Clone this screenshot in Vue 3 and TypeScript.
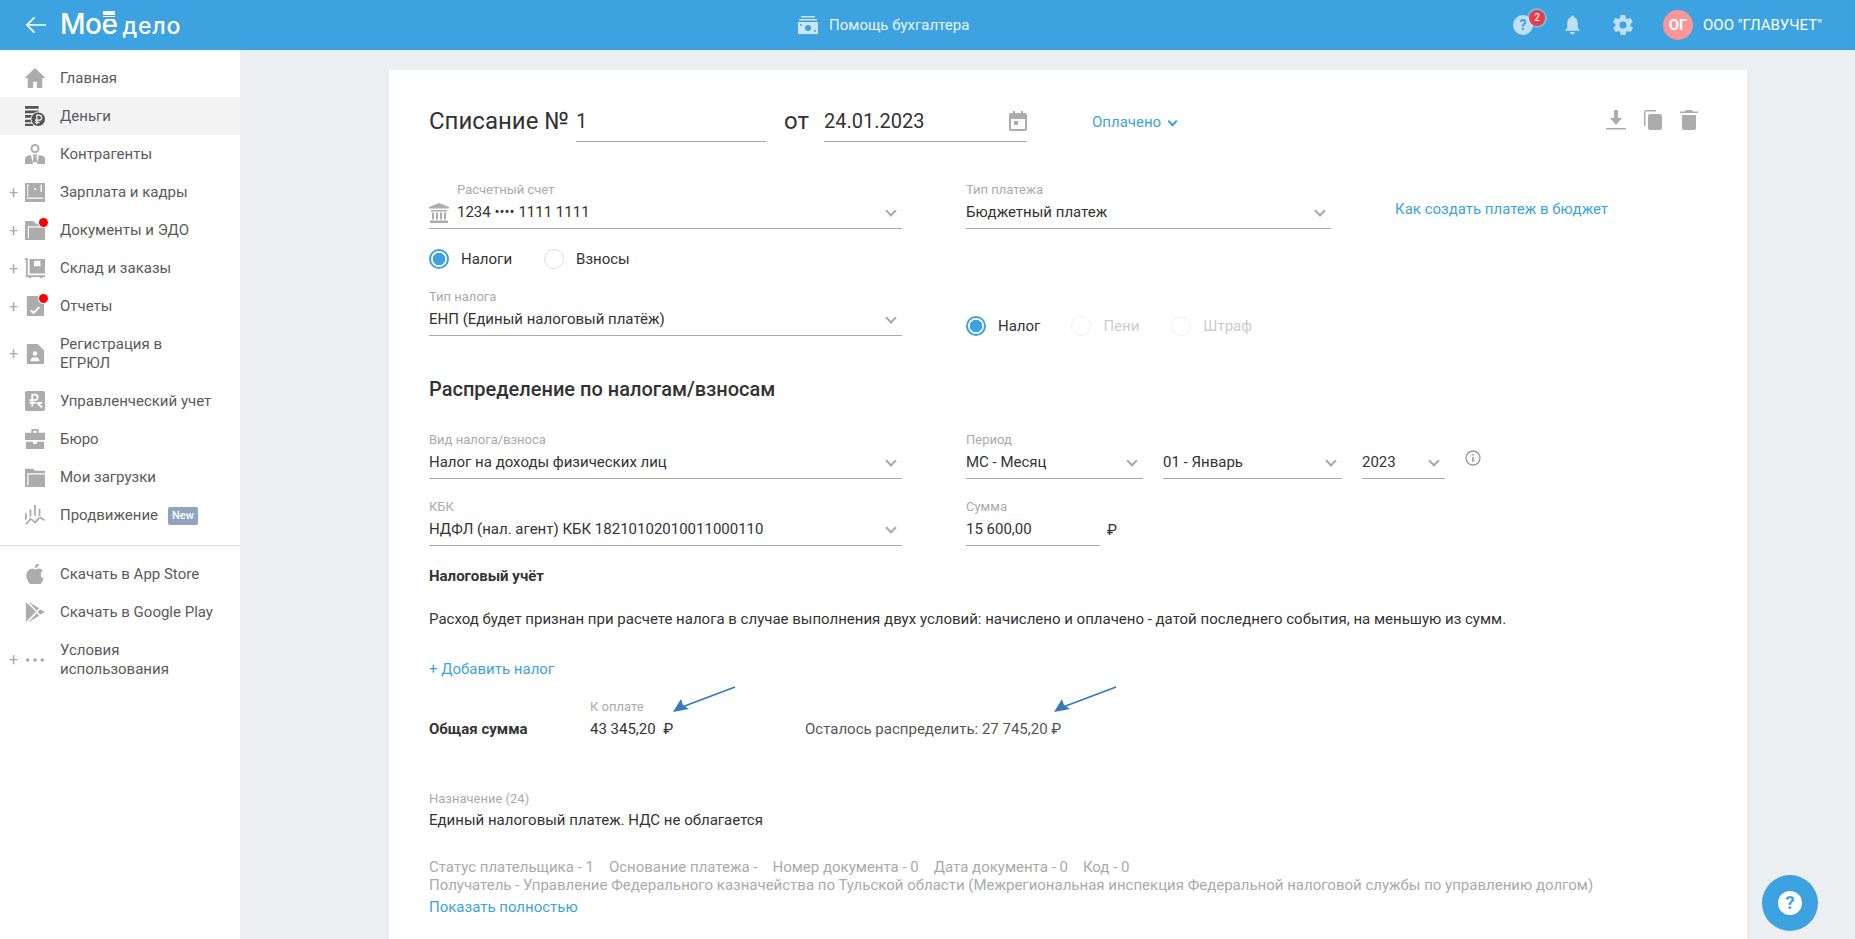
<script setup lang="ts">
interface NavItem {
  label: string
  lines?: string[]
  icon: string
  plus?: boolean
  dot?: boolean
  active?: boolean
  isNew?: boolean
  tall?: boolean
}

const navTop: NavItem[] = [
  { label: 'Главная', icon: 'M12 1 .5 12H4v11h6v-7h4v7h6V12h3.500z' },
  { label: 'Деньги', active: true, icon: 'M1 1h15v3H1zM1 6h15v3H1zM1 11h8v3H1zM1 16h7v3H1zM1 20.500h9V23H1z' },
  { label: 'Контрагенты', icon: 'M12 1a5 5 0 1 1 0 10 5 5 0 0 1 0-10zm0 2.200a2.800 2.800 0 1 0 0 5.600 2.800 2.800 0 0 0 0-5.600zM9 12.500h6l-1.500 2 1 6.500h-5l1-6.500zM7.500 13 9.500 21v2H1v-6c0-2 3-3.500 6.500-4zM16.500 13c3.500.5 6.500 2 6.500 4v6h-8.500v-2z' },
  { label: 'Зарплата и кадры', plus: true, icon: 'M1 2h22v21H1zM3 18v1.500h18V18zM3.500 4v13h1V5.500h1V4zM12 7.500a1.200 1.200 0 1 0 0 2.400 1.200 1.200 0 0 0 0-2.400zM18 4h1.500v8H18z' },
  { label: 'Документы и ЭДО', plus: true, dot: true, icon: 'M1 2h9l3 3h10v18H1zM4 8v13h1.300V9.300H23V8z' },
  { label: 'Склад и заказы', plus: true, icon: 'M1 1h3v19h19v2h-3a1.500 1.500 0 0 1-3 0H8a1.500 1.500 0 0 1-3 0H2V3H1zM6 2h17v16H6zM11 4v6h7V4z' },
  { label: 'Отчеты', plus: true, dot: true, icon: 'M3 1h12l7 7v15H3zM8 16l-1.500 1.500L10.500 21l7-7-1.500-1.500-5.500 5.500z' },
  { label: 'Регистрация в ЕГРЮЛ', lines: ['Регистрация в', 'ЕГРЮЛ'], plus: true, tall: true, icon: 'M3 1h12l7 7v15H3zM12 9a2.500 2.500 0 1 0 0 5 2.500 2.500 0 0 0 0-5zM7 20h10c0-3-2-4.500-5-4.500S7 17 7 20z' },
  { label: 'Управленческий учет', icon: 'M3 1h18a2 2 0 0 1 2 2v18a2 2 0 0 1-2 2H3a2 2 0 0 1-2-2V3a2 2 0 0 1 2-2zM8 4v6H6v2h2v1H6v2h2v3h2v-3h3v-2h-3v-1h2a4 4 0 0 0 0-8zm2 2h2a2 2 0 0 1 0 4h-2zM14 15l1.500 1.500 3.500 3.500 1.500-1.500-3.500-3.500H20v-2h-6z' },
  { label: 'Бюро', icon: 'M8 1h8v4h7v8H1V5h7zM10 3v2h4V3zM2 15h8v2.500h4V15h8v8H2z' },
  { label: 'Мои загрузки', icon: 'M1 3h9l2 2h11v18H1zM3.500 8v13h1.300V9.300H23V8z' },
  { label: 'Продвижение', isNew: true, icon: 'M6 6h2v7l-2 2zM11 1h2v13l-2-2zM16 5h2v9l-2 1zM1 10h2v6l-2 2zM1 22l6-7 5 4 5-6 6 4-1 1.500-4.500-3-5 6-5-4-4.500 5z' }
]

const navBottom: NavItem[] = [
  { label: 'Скачать в App Store', icon: 'M16.500 0c.2 2.800-2.200 5.500-4.800 5.500C11.400 2.800 14 .2 16.500 0zM12.200 7c1 0 2.300-1 4-1 2 0 3.500 1 4.500 2.500-3.500 2-3 7 .8 8.500-1 3-3.200 7-5 7-1.500 0-2-1-4-1s-2.500 1-4 1C6 24 2.500 18 2.500 14c0-4.500 3-7.800 6-7.800 1.500 0 2.700.8 3.700.8z' },
  { label: 'Скачать в Google Play', icon: 'M2 1l11 10.500L2 23zM4 0l12.500 8-2.500 2.500zM4 24l12.500-8-2.500-2.500zM17.500 9l5.500 3-5.500 3-2.500-3z' },
  { label: 'Условия использования', lines: ['Условия', 'использования'], plus: true, tall: true, icon: 'M4 10a2 2 0 1 1 0 4 2 2 0 0 1 0-4zM12 10a2 2 0 1 1 0 4 2 2 0 0 1 0-4zM20 10a2 2 0 1 1 0 4 2 2 0 0 1 0-4z' }
]
</script>

<template>
  <div class="page">
    <header class="top">
      <div class="top_left">
        <svg class="back" viewBox="0 0 22 18"><path d="M10 1 2 9l8 8M2 9h20" fill="none" stroke="#fff" stroke-width="1.800"/></svg>
        <div class="logo">Мо<span class="yo">ё</span> <span class="logo_small">дело</span></div>
      </div>
      <div class="helper">
        <svg class="helper_icon" viewBox="0 0 20 18"><path d="M3 0h14v1.500H3zM1 3h18v1.500H1zM0 6h20v12H0z" fill="#cce6f7"/><circle cx="10" cy="12" r="3" fill="#3da3e0"/><circle cx="3" cy="9" r="1" fill="#3da3e0"/><circle cx="17" cy="15" r="1" fill="#3da3e0"/></svg>
        <span>Помощь бухгалтера</span>
      </div>
      <div class="top_right">
        <div class="help_icon">
          <svg viewBox="0 0 20 20" width="20" height="20"><circle cx="10" cy="10" r="10" fill="#bfe0f5"/><text x="10" y="15" text-anchor="middle" class="q">?</text></svg>
          <span class="badge">2</span>
        </div>
        <svg class="bell" viewBox="0 0 18 20"><path d="M9 0a1.500 1.500 0 0 1 1.500 1.500C13 2.300 14.500 5 14.500 8v5l2.500 3H1l2.500-3V8c0-3 1.500-5.700 4-6.500A1.500 1.500 0 0 1 9 0zM6.500 17.500h5a2.500 2.500 0 0 1-5 0z" fill="#bfe0f5"/></svg>
        <svg class="gear" viewBox="0 0 24 24"><path d="M19.400 13c.1-.3.1-.7.1-1s0-.7-.1-1l2.100-1.600c.2-.2.2-.4.100-.6l-2-3.500c-.1-.2-.4-.3-.6-.2l-2.500 1c-.5-.4-1.100-.7-1.700-1l-.4-2.600c0-.3-.2-.5-.5-.5h-4c-.3 0-.5.200-.5.500l-.4 2.600c-.6.300-1.200.6-1.700 1l-2.500-1c-.2-.1-.5 0-.6.200l-2 3.500c-.1.200-.1.400.1.600L4.600 11c-.1.300-.1.700-.1 1s0 .7.100 1l-2.100 1.600c-.2.200-.2.400-.1.600l2 3.500c.1.200.4.300.6.200l2.500-1c.5.400 1.100.7 1.700 1l.4 2.600c0 .3.200.5.500.5h4c.3 0 .5-.2.500-.5l.4-2.600c.6-.3 1.200-.6 1.700-1l2.500 1c.2.100.5 0 .6-.2l2-3.500c.1-.2.1-.4-.1-.6zM12 15.500a3.500 3.500 0 1 1 0-7 3.500 3.500 0 0 1 0 7z" fill="#bfe0f5"/></svg>
        <div class="avatar">ОГ</div>
        <span class="org">ООО "ГЛАВУЧЕТ"</span>
      </div>
    </header>

    <div class="body">
      <aside class="side">
        <ul class="nav">
          <li v-for="item in navTop" :key="item.label" class="nav_item" :class="{ active: item.active, tall: item.tall }">
            <span class="plus">{{ item.plus ? '+' : '' }}</span>
            <span class="nav_icon">
              <svg viewBox="1 1 22 22" width="20" height="20"><path :d="item.icon" :fill="item.active ? '#555' : '#acacac'" fill-rule="evenodd"/>
                <g v-if="item.active"><circle cx="15.500" cy="15.500" r="8" fill="#555" stroke="#f4f4f4" stroke-width="1"/><path d="M14 21v-10h2.500a2.800 2.800 0 0 1 0 5.600H12M12 19h5" fill="none" stroke="#fff" stroke-width="1.300"/></g>
              </svg>
              <i v-if="item.dot" class="dot"></i>
            </span>
            <span class="nav_text">
              <template v-if="item.lines"><span v-for="l in item.lines" :key="l" class="nav_line">{{ l }}</span></template>
              <template v-else>{{ item.label }}</template>
              <em v-if="item.isNew" class="new">New</em>
            </span>
          </li>
        </ul>
        <hr class="side_line" />
        <ul class="nav">
          <li v-for="item in navBottom" :key="item.label" class="nav_item" :class="{ tall: item.tall }">
            <span class="plus">{{ item.plus ? '+' : '' }}</span>
            <span class="nav_icon"><svg viewBox="1 1 22 22" width="20" height="20"><path :d="item.icon" fill="#acacac" /></svg></span>
            <span class="nav_text">
              <template v-if="item.lines"><span v-for="l in item.lines" :key="l" class="nav_line">{{ l }}</span></template>
              <template v-else>{{ item.label }}</template>
            </span>
          </li>
        </ul>
      </aside>

      <main class="main">
        <section class="card">
          <div class="head_row">
            <span class="title">Списание №</span>
            <div class="head_input num">1</div>
            <span class="title from">от</span>
            <div class="head_input date">
              24.01.2023
              <svg class="cal" viewBox="0 0 18 20"><path d="M4 0h2v2h6V0h2v2h2a2 2 0 0 1 2 2v14a2 2 0 0 1-2 2H2a2 2 0 0 1-2-2V4a2 2 0 0 1 2-2h2zM2 8v10h14V8zM5 10h4v4H5z" fill="#acacac" fill-rule="evenodd"/></svg>
            </div>
            <span class="status">Оплачено<i class="chev chev_blue"></i></span>
            <div class="actions">
              <svg width="20" height="20" viewBox="0 0 20 20"><path d="M8 0h4v8h4l-6 7-6-7h4zM0 18h20v1.500H0z" fill="#acacac"/></svg>
              <svg width="18" height="20" viewBox="0 0 18 20"><path d="M0 2a2 2 0 0 1 2-2h10v1.500H1.500V16H0z" fill="#acacac"/><rect x="4" y="4" width="14" height="16" rx="2" fill="#acacac"/></svg>
              <svg width="18" height="20" viewBox="0 0 18 20"><path d="M6 0h6l1 1.500h5V3H0V1.500h5zM2 5h14v13a2 2 0 0 1-2 2H4a2 2 0 0 1-2-2z" fill="#acacac"/></svg>
            </div>
          </div>

          <div class="row row_acc">
            <div class="field w473 with_icon">
              <svg class="bank" viewBox="0 0 20 20"><path d="M10 0l10 4v1.500H0V4zM2 7h16v1.500H2zM3 9.500h2v7H3zM7 9.500h2v7H7zM11 9.500h2v7h-2zM15 9.500h2v7h-2zM1 17.500h18V20H1z" fill="#acacac"/></svg>
              <label>Расчетный счет</label>
              <div class="value">1234 •••• 1111 1111<i class="chev"></i></div>
            </div>
            <div class="field w365 gap64">
              <label>Тип платежа</label>
              <div class="value">Бюджетный платеж<i class="chev"></i></div>
            </div>
            <a class="link budget">Как создать платеж в бюджет</a>
          </div>

          <div class="radios r_top">
            <span class="radio on"></span><span class="r_label first">Налоги</span>
            <span class="radio"></span><span class="r_label">Взносы</span>
          </div>

          <div class="row row_tax">
            <div class="field w473">
              <label>Тип налога</label>
              <div class="value">ЕНП (Единый налоговый платёж)<i class="chev"></i></div>
            </div>
            <div class="radios r_kind">
              <span class="radio on"></span><span class="r_label k1">Налог</span>
              <span class="radio off"></span><span class="r_label muted k2">Пени</span>
              <span class="radio off"></span><span class="r_label muted">Штраф</span>
            </div>
          </div>

          <h2 class="section">Распределение по налогам/взносам</h2>

          <div class="row row_dist">
            <div class="field w473">
              <label>Вид налога/взноса</label>
              <div class="value">Налог на доходы физических лиц<i class="chev"></i></div>
            </div>
            <div class="field w177 gap64">
              <label>Период</label>
              <div class="value">МС - Месяц<i class="chev"></i></div>
            </div>
            <div class="field w179 gap20">
              <div class="value no_label">01 - Январь<i class="chev"></i></div>
            </div>
            <div class="field w83 gap20">
              <div class="value no_label">2023<i class="chev"></i></div>
            </div>
            <svg class="info" viewBox="0 0 16 16"><circle cx="8" cy="8" r="7" fill="none" stroke="#999" stroke-width="1.300"/><path d="M7.200 4h1.600v1.600H7.200zM7.200 7h1.600v5H7.200z" fill="#999"/></svg>
          </div>

          <div class="row row_kbk">
            <div class="field w473">
              <label>КБК</label>
              <div class="value">НДФЛ (нал. агент) КБК 18210102010011000110<i class="chev"></i></div>
            </div>
            <div class="field w134 gap64">
              <label>Сумма</label>
              <div class="value">15 600,00</div>
            </div>
            <span class="rub_after">₽</span>
          </div>

          <div class="tax_title">Налоговый учёт</div>
          <p class="tax_text">Расход будет признан при расчете налога в случае выполнения двух условий: начислено и оплачено - датой последнего события, на меньшую из сумм.</p>
          <a class="link add">+ Добавить налог</a>

          <div class="totals">
            <span class="tot_title">Общая сумма</span>
            <div class="tot_pay">
              <label>К оплате</label>
              <div>43 345,20 &nbsp;₽</div>
            </div>
            <div class="tot_left">Осталось распределить: 27 745,20 ₽</div>
            <svg class="arrow a1" viewBox="0 0 64 28"><path d="M63 1 10 21" stroke="#3a78bd" stroke-width="1.800" fill="none"/><path d="M1 26 9 13l2 6 6 4z" fill="#3a78bd"/></svg>
            <svg class="arrow a2" viewBox="0 0 64 28"><path d="M63 1 10 21" stroke="#3a78bd" stroke-width="1.800" fill="none"/><path d="M1 26 9 13l2 6 6 4z" fill="#3a78bd"/></svg>
          </div>

          <label class="purpose_label">Назначение (24)</label>
          <div class="purpose">Единый налоговый платеж. НДС не облагается</div>

          <div class="details">
            <div class="details_row">
              <span>Статус плательщика - 1</span>
              <span>Основание платежа -</span>
              <span>Номер документа - 0</span>
              <span>Дата документа - 0</span>
              <span>Код - 0</span>
            </div>
            <div>Получатель - Управление Федерального казначейства по Тульской области (Межрегиональная инспекция Федеральной налоговой службы по управлению долгом)</div>
          </div>
          <a class="link show">Показать полностью</a>
        </section>
      </main>
    </div>

    <button class="float_help"><span class="float_q">?</span></button>
  </div>
</template>

<style scoped>
.page {
  height: 939px;
  overflow: hidden;
  background: #ebeff2;
  font-family: Roboto, "Liberation Sans", sans-serif;
  font-size: 15px;
  color: #333;
}

.top {
  display: flex;
  align-items: center;
  height: 50px;
  background: #3da3e0;
  color: #fff;
}

.top_left {
  display: flex;
  align-items: center;
  width: 798px;
  padding-left: 25px;
  box-sizing: border-box;
}

.back {
  width: 21px;
  height: 18px;
}

.logo {
  position: relative;
  margin-left: 14px;
  font-family: Inter, sans-serif;
  font-size: 28px;
  font-weight: 500;
  line-height: 34px;
  letter-spacing: -.5px;
  white-space: nowrap;
}

.logo_small {
  margin-left: -2px;
  font-size: 23px;
  font-weight: 500;
  letter-spacing: .8px;
}

.yo {
  position: relative;
}

.yo::before {
  content: "";
  position: absolute;
  top: 4px;
  left: 2px;
  width: 12px;
  height: 6px;
  background: repeating-linear-gradient(#fff 0 1.5px, #3da3e0 1.5px 2.3px);
  box-shadow: 0 0 0 2px #3da3e0;
}

.helper {
  display: flex;
  align-items: center;
  gap: 11px;
  font-size: 15px;
  color: #eaf5fc;
}

.helper_icon {
  width: 20px;
  height: 18px;
}

.top_right {
  display: flex;
  align-items: center;
  margin-left: auto;
  padding-right: 33px;
}

.help_icon {
  position: relative;
  width: 20px;
  height: 20px;
}

.help_icon svg {
  display: block;
}

.q {
  font: 700 14px Roboto, sans-serif;
  fill: #3da3e0;
}

.badge {
  position: absolute;
  top: -5px;
  left: 16px;
  width: 16px;
  height: 16px;
  border-radius: 50%;
  background: #ee3b46;
  box-shadow: 0 0 0 2px rgba(190, 224, 245, .4);
  color: #fff;
  font-size: 10px;
  font-weight: 500;
  line-height: 16px;
  text-align: center;
}

.bell {
  width: 17px;
  height: 20px;
  margin-left: 31px;
}

.gear {
  width: 24px;
  height: 24px;
  margin-left: 30px;
}

.avatar {
  width: 30px;
  height: 30px;
  margin-left: 28px;
  border-radius: 50%;
  background: #fc9595;
  color: #fff;
  font-size: 15px;
  font-weight: 700;
  line-height: 30px;
  text-align: center;
}

.org {
  margin-left: 10px;
  font-size: 15px;
  white-space: nowrap;
}

.body {
  display: flex;
  height: 889px;
}

.side {
  flex: none;
  width: 240px;
  padding-top: 9px;
  background: #fff;
}

.nav {
  margin: 0;
  padding: 0;
  list-style: none;
}

.nav_item {
  display: flex;
  align-items: center;
  height: 38px;
  color: #5a5a5a;
}

.nav_item.tall {
  height: 57px;
  line-height: 19px;
}

.nav_item.active {
  background: #f4f4f4;
}

.plus {
  width: 25px;
  padding-left: 9px;
  box-sizing: border-box;
  font-size: 16px;
  color: #aaa;
}

.nav_icon {
  position: relative;
  width: 20px;
  height: 20px;
  margin-right: 15px;
}

.nav_icon svg {
  display: block;
}

.dot {
  position: absolute;
  top: -2px;
  right: -3px;
  width: 9px;
  height: 9px;
  border-radius: 50%;
  background: #f00;
  box-shadow: 0 0 0 1px #fff;
}

.nav_line {
  display: block;
}

.new {
  display: inline-block;
  margin-left: 10px;
  padding: 0 4px;
  border-radius: 2px;
  background: #8fa4bf;
  color: #fff;
  font-size: 11px;
  font-style: normal;
  font-weight: 500;
  line-height: 18px;
  vertical-align: 1px;
}

.side_line {
  height: 1px;
  margin: 11px 0 9px;
  border: 0;
  background: #d8d8d8;
}

.main {
  flex: 1;
  padding: 20px 108px 0 149px;
  overflow: hidden;
}

.card {
  height: 900px;
  padding: 30px 49px 0 40px;
  background: #fff;
}

.head_row {
  display: flex;
  align-items: flex-start;
  height: 42px;
  line-height: 42px;
}

.title {
  font-size: 24px;
  color: #333;
}

.head_input {
  position: relative;
  height: 41px;
  border-bottom: 1px solid #aaa;
  font-size: 20px;
}

.num {
  width: 191px;
  margin-left: 7px;
}

.from {
  margin-left: 17px;
}

.date {
  width: 203px;
  margin-left: 15px;
}

.cal {
  position: absolute;
  top: 11px;
  right: 0;
  width: 18px;
  height: 20px;
}

.status {
  margin-left: 65px;
  color: #3da3e0;
  font-size: 15px;
  line-height: 44px;
}

.actions {
  display: flex;
  gap: 18px;
  margin-left: auto;
  padding-top: 10px;
  line-height: 0;
}

.row {
  display: flex;
  align-items: flex-start;
}

.row_acc {
  margin-top: 41px;
}

.field {
  position: relative;
  flex: none;
  box-sizing: border-box;
  height: 46px;
  border-bottom: 1px solid #aaa;
}

.field label,
.purpose_label,
.tot_pay label {
  display: block;
  color: #aaa;
  font-size: 13px;
  line-height: 14px;
}

.value {
  position: relative;
  height: 31px;
  font-size: 15px;
  line-height: 31px;
  white-space: nowrap;
}

.no_label {
  margin-top: 14px;
}

.with_icon {
  padding-left: 28px;
}

.bank {
  position: absolute;
  left: 0;
  bottom: 5px;
  width: 20px;
  height: 20px;
}

.w473 { width: 473px; }
.w365 { width: 365px; }
.w177 { width: 177px; }
.w179 { width: 179px; }
.w83 { width: 83px; }
.w134 { width: 134px; }
.gap64 { margin-left: 64px; }
.gap20 { margin-left: 20px; }

.chev {
  position: absolute;
  top: 10px;
  right: 7px;
  width: 6px;
  height: 6px;
  border-right: 2px solid #aaa;
  border-bottom: 2px solid #aaa;
  transform: rotate(45deg);
}

.chev_blue {
  position: relative;
  display: inline-block;
  top: -2px;
  right: auto;
  width: 5px;
  height: 5px;
  margin-left: 8px;
  border-color: #3da3e0;
}

.link {
  color: #3da3e0;
  font-size: 15px;
}

.budget {
  margin: 17px 0 0 64px;
}

.radios {
  display: flex;
  align-items: center;
  height: 20px;
  font-size: 15px;
}

.r_top {
  margin-top: 20px;
}

.radio {
  flex: none;
  box-sizing: border-box;
  width: 20px;
  height: 20px;
  border: 1px solid #ddd;
  border-radius: 50%;
}

.radio.on {
  border: 2px solid #3da3e0;
  background: radial-gradient(circle, #3da3e0 0 6px, #fff 6.5px);
}

.radio.off {
  border-color: #eee;
}

.r_label {
  margin-left: 12px;
}

.first {
  margin-right: 32px;
}

.k1 {
  margin-right: 31px;
}

.k2 {
  margin-right: 32px;
}

.muted {
  color: #ccc;
}

.row_tax {
  margin-top: 21px;
}

.r_kind {
  margin: 26px 0 0 64px;
}

.section {
  margin: 41px 0 0;
  font-size: 20px;
  font-weight: 500;
  line-height: 24px;
  color: #333;
}

.row_dist {
  margin-top: 32px;
}

.info {
  width: 16px;
  height: 16px;
  margin: 17px 0 0 20px;
}

.row_kbk {
  margin-top: 21px;
}

.rub_after {
  margin: 21px 0 0 7px;
}

.tax_title {
  margin-top: 20px;
  font-weight: 700;
  font-size: 15px;
  line-height: 20px;
}

.tax_text {
  margin: 23px 0 0;
  line-height: 20px;
  white-space: nowrap;
}

.add {
  display: block;
  margin-top: 30px;
  line-height: 20px;
}

.totals {
  position: relative;
  display: flex;
  align-items: flex-end;
  margin-top: 20px;
  height: 40px;
}

.tot_title {
  width: 161px;
  font-weight: 700;
  line-height: 20px;
}

.tot_pay {
  width: 215px;
  line-height: 20px;
}

.tot_pay label {
  margin-bottom: 5px;
}

.tot_left {
  line-height: 20px;
  color: #555;
}

.arrow {
  position: absolute;
  width: 64px;
  height: 28px;
  top: -13px;
}

.a1 { left: 243px; }
.a2 { left: 624px; }

.purpose_label {
  margin-top: 53px;
}

.purpose {
  margin-top: 4px;
  line-height: 20px;
}

.details {
  margin-top: 28px;
  color: #aaa;
  line-height: 18px;
  white-space: nowrap;
}

.details_row {
  display: flex;
  gap: 15px;
}

.show {
  display: block;
  margin-top: 3px;
  line-height: 20px;
}

.float_help {
  position: fixed;
  right: 37px;
  bottom: 8px;
  display: flex;
  align-items: center;
  justify-content: center;
  width: 56px;
  height: 56px;
  padding: 0;
  border: 0;
  border-radius: 50%;
  background: #3da3e0;
}

.float_q {
  width: 24px;
  height: 24px;
  border-radius: 50%;
  background: #fff;
  color: #3da3e0;
  font: 700 19px/24px Roboto, sans-serif;
  text-align: center;
}
</style>
